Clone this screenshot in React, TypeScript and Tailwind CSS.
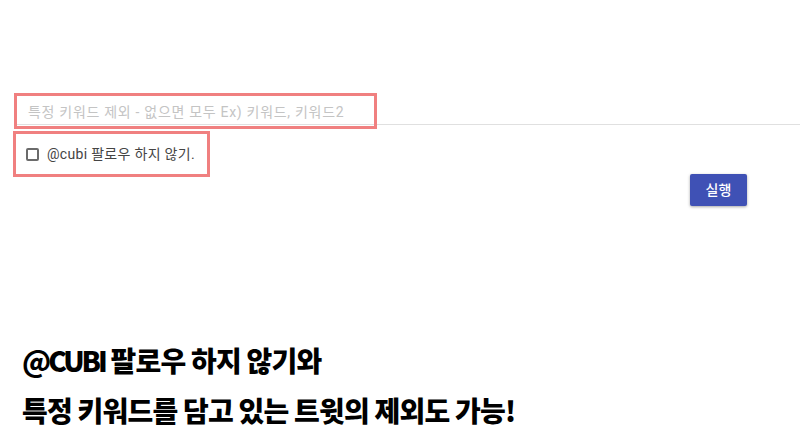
export default function App() {
  return (
    <div className="relative h-[444px] w-[800px] overflow-hidden bg-white font-['Roboto','Noto_Sans_CJK_KR',sans-serif]">
      <div className="pl-[14px] pt-[93px]">
        {/* keyword input */}
        <div className="relative">
          <div className="ml-[2px] flex h-[32px] items-center border-b border-[#e0e0e0] pl-[12px] pt-[8px] text-[14px] tracking-[0.7px] text-[#c4c4c4]">
            특정 키워드 제외 - 없으면 모두 Ex) 키워드, 키워드2
          </div>
          <div className="absolute left-0 top-0 h-[36px] w-[363px] border-[3px] border-[#f08080]" />
        </div>

        {/* checkbox */}
        <div className="-ml-px mt-[6px] flex h-[46px] w-[197px] items-center gap-[8px] border-[3px] border-[#f08080] pl-[10px]">
          <span className="h-[13px] w-[13px] rounded-[2px] border-2 border-[#6b6b6b]" />
          <span className="text-[14px] tracking-[0.3px] text-[#444]">@cubi 팔로우 하지 않기.</span>
        </div>
      </div>

      <div className="-mt-[3px] flex justify-end pr-[53px]">
        <button className="h-[32px] w-[57px] rounded-[2px] bg-[#3f51b5] text-[14px] font-medium text-white shadow-[0_1px_3px_rgba(0,0,0,0.35)]">
          실행
        </button>
      </div>

      <div className="mt-[129px] pl-[22px] font-['Noto_Sans_CJK_KR',sans-serif] text-[28px] font-black leading-[50px] tracking-[-0.8px] text-black">
        <div>
          <span className="tracking-[-3px]">@CUBI</span> 팔로우 하지 않기와
        </div>
        <div>특정 키워드를 담고 있는 트윗의 제외도 가능!</div>
      </div>
    </div>
  );
}
